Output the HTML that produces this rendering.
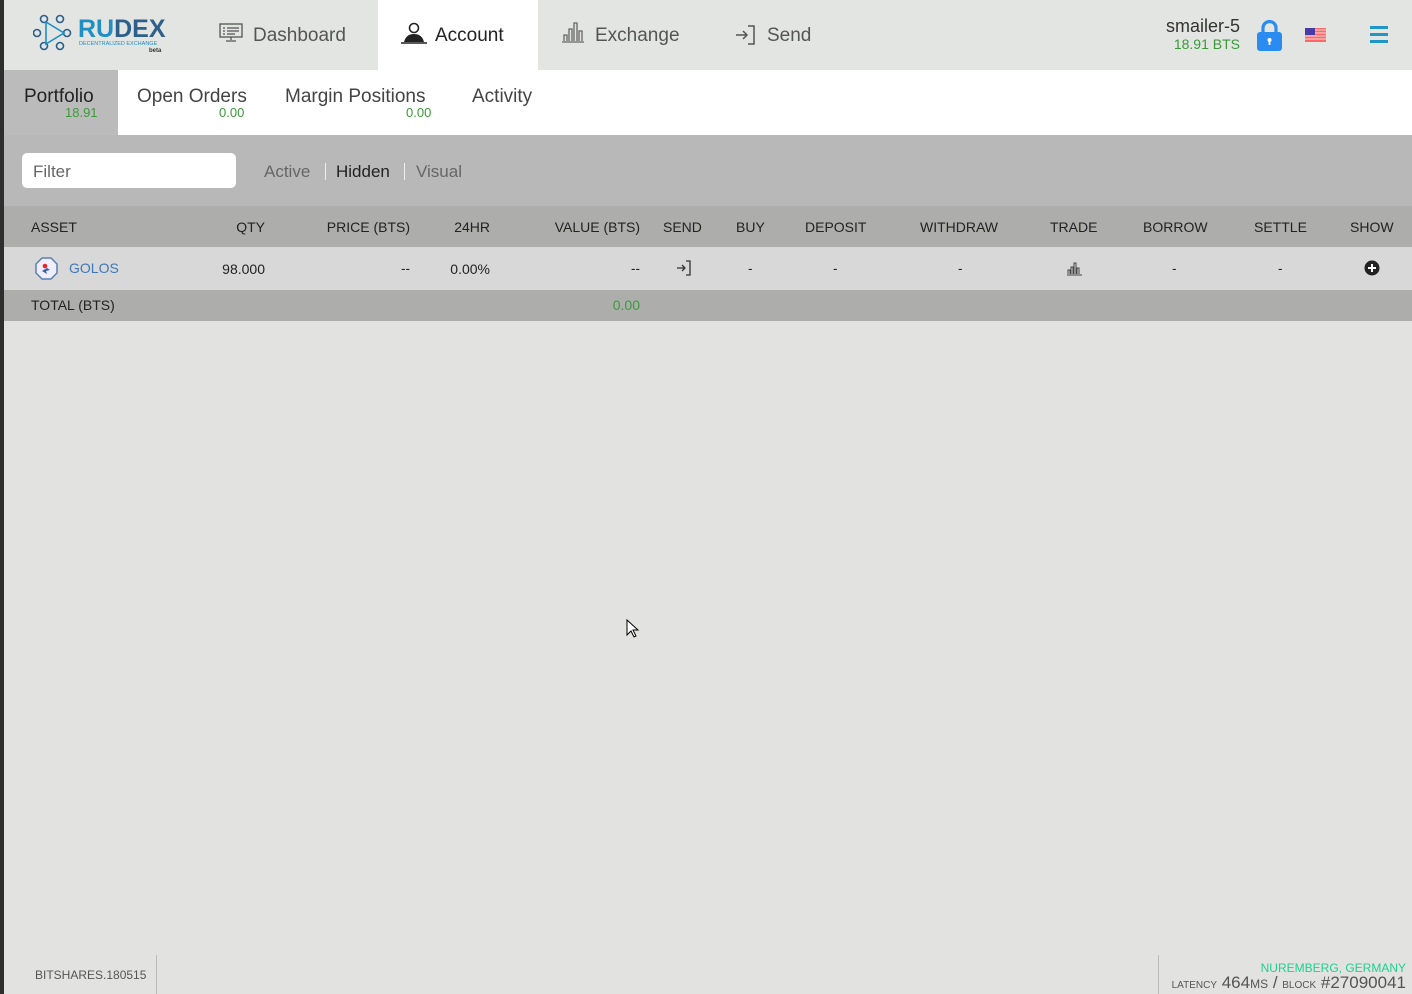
<!DOCTYPE html>
<html><head><meta charset="utf-8"><style>
*{margin:0;padding:0;box-sizing:border-box}
body{width:1412px;height:994px;background:#e2e3e1;font-family:"Liberation Sans",sans-serif;position:relative;overflow:hidden;color:#333}
.a{position:absolute;white-space:nowrap}
.hd{font-size:14px;color:#222;top:219px}
.rw{font-size:13.5px;color:#222;top:261px}
</style></head><body>
<div class="a" style="left:0;top:0;width:4px;height:994px;background:#2e2e2e"></div>
<div class="a" style="left:4px;top:0;width:1408px;height:70px;background:#e3e5e2"></div>
<div class="a" style="left:378px;top:0;width:160px;height:70px;background:#fff"></div>
<svg class="a" style="left:33px;top:14px" width="42" height="38" viewBox="0 0 42 38" fill="none" stroke="#2a5d8c" stroke-width="1.6">
<circle cx="11" cy="5" r="3.5"/><circle cx="27" cy="5" r="3.5"/><circle cx="4" cy="19" r="3.5"/><circle cx="34" cy="19" r="3.5" /><circle cx="11" cy="32" r="3.5"/><circle cx="27" cy="32" r="3.5"/>
<path d="M13 8 L31 19 L13 30 Z" stroke="#1c8fc6"/></svg>
<div class="a" style="left:78px;top:15px;font-size:25px;font-weight:bold;color:#1f8fc4">RU<span style="color:#2d5f8a">DEX</span></div>
<div class="a" style="left:79px;top:41px;font-size:5.5px;color:#1f8fc4">DECENTRALIZED EXCHANGE</div>
<div class="a" style="left:149px;top:48px;font-size:6px;color:#333;font-weight:bold">beta</div>
<svg class="a" style="left:219px;top:23px" width="24" height="20" viewBox="0 0 24 20" fill="none" stroke="#555" stroke-width="1.3"><rect x="1" y="1" width="22" height="13"/><path d="M4 5h2M8 5h12M4 8h2M8 8h12M4 11h2M8 11h8M12 14v3M7 18h10"/></svg>
<div class="a" style="left:253px;top:25px;font-size:19px;color:#555">Dashboard</div>
<svg class="a" style="left:401px;top:22px" width="26" height="22" viewBox="0 0 26 22"><circle cx="13" cy="6" r="4.5" fill="none" stroke="#222" stroke-width="1.6"/><path d="M3 20 Q5 12 13 12 Q21 12 23 20Z" fill="#222"/><path d="M0 21h26" stroke="#222" stroke-width="1.4"/></svg>
<div class="a" style="left:435px;top:25px;font-size:19px;color:#222">Account</div>
<svg class="a" style="left:561px;top:21px" width="24" height="22" viewBox="0 0 24 22" fill="none" stroke="#666" stroke-width="1.3"><path d="M1 21h22M3 20v-6h3v6M8 20v-12h3v12M13 20v-18h3v18M18 20v-10h3v10"/></svg>
<div class="a" style="left:595px;top:25px;font-size:19px;color:#555">Exchange</div>
<svg class="a" style="left:735px;top:24px" width="22" height="22" viewBox="0 0 22 22" fill="none" stroke="#555" stroke-width="1.5"><path d="M1 11h11M8 7l4 4-4 4" /><path d="M13 2h6v18h-6"/></svg>
<div class="a" style="left:767px;top:25px;font-size:19px;color:#555">Send</div>
<div class="a" style="right:172px;top:16px;font-size:18px;color:#333">smailer-5</div>
<div class="a" style="right:172px;top:36px;font-size:14px;color:#3a9a3a">18.91 BTS</div>
<svg class="a" style="left:1257px;top:20px" width="25" height="31" viewBox="0 0 25 31"><path d="M6 13V8a6.5 6.5 0 0 1 13 0v5" fill="none" stroke="#2a8cf0" stroke-width="3.2"/><rect x="0" y="12" width="25" height="19" rx="3" fill="#2a8cf0"/><circle cx="12.5" cy="20" r="2" fill="#fff"/><rect x="11.6" y="20" width="1.8" height="5" fill="#fff"/></svg>
<svg class="a" style="left:1305px;top:28px" width="21" height="14" viewBox="0 0 21 14"><rect width="21" height="14" fill="#f66"/><path d="M0 2h21M0 5h21M0 8h21M0 11h21" stroke="#fdd" stroke-width="1"/><rect width="10" height="7" fill="#4a3aa8"/></svg>
<div class="a" style="left:1370px;top:26px;width:18px;height:3px;background:#1e96c8"></div>
<div class="a" style="left:1370px;top:33px;width:18px;height:3px;background:#1e96c8"></div>
<div class="a" style="left:1370px;top:40px;width:18px;height:3px;background:#1e96c8"></div>
<div class="a" style="left:4px;top:70px;width:1408px;height:65px;background:#fff"></div>
<div class="a" style="left:4px;top:70px;width:114px;height:65px;background:#bbb"></div>
<div class="a" style="left:24px;top:86px;font-size:19px;color:#222">Portfolio</div>
<div class="a" style="left:65px;top:105px;font-size:13px;color:#3a9a3a">18.91</div>
<div class="a" style="left:137px;top:86px;font-size:19px;color:#444">Open Orders</div>
<div class="a" style="left:219px;top:105px;font-size:13px;color:#3a9a3a">0.00</div>
<div class="a" style="left:285px;top:86px;font-size:19px;color:#444">Margin Positions</div>
<div class="a" style="left:406px;top:105px;font-size:13px;color:#3a9a3a">0.00</div>
<div class="a" style="left:472px;top:86px;font-size:19px;color:#444">Activity</div>
<div class="a" style="left:4px;top:135px;width:1408px;height:71px;background:#b8b8b8"></div>
<div class="a" style="left:22px;top:153px;width:214px;height:35px;background:#fff;border-radius:5px"></div>
<div class="a" style="left:33px;top:162px;font-size:17px;color:#666">Filter</div>
<div class="a" style="left:264px;top:162px;font-size:17px;color:#666">Active</div>
<div class="a" style="left:325px;top:163px;width:1px;height:17px;background:#eee"></div>
<div class="a" style="left:336px;top:162px;font-size:17px;color:#222">Hidden</div>
<div class="a" style="left:404px;top:163px;width:1px;height:17px;background:#eee"></div>
<div class="a" style="left:416px;top:162px;font-size:17px;color:#666">Visual</div>
<div class="a" style="left:4px;top:206px;width:1408px;height:41px;background:#adaeac"></div>
<div class="a" style="left:4px;top:247px;width:1408px;height:43px;background:#d8d8d8"></div>
<div class="a" style="left:4px;top:290px;width:1408px;height:31px;background:#adaeac"></div>
<div class="a hd" style="left:31px">ASSET</div>
<div class="a hd" style="right:1147px">QTY</div>
<div class="a hd" style="right:1002px">PRICE (BTS)</div>
<div class="a hd" style="right:922px">24HR</div>
<div class="a hd" style="right:772px">VALUE (BTS)</div>
<div class="a hd" style="left:663px">SEND</div>
<div class="a hd" style="left:736px">BUY</div>
<div class="a hd" style="left:805px">DEPOSIT</div>
<div class="a hd" style="left:920px">WITHDRAW</div>
<div class="a hd" style="left:1050px">TRADE</div>
<div class="a hd" style="left:1143px">BORROW</div>
<div class="a hd" style="left:1254px">SETTLE</div>
<div class="a hd" style="left:1350px">SHOW</div>
<svg class="a" style="left:35px;top:257px" width="23" height="23" viewBox="0 0 23 23"><path d="M7 1h9l6 6v9l-6 6H7l-6-6V7z" fill="#eef" stroke="#5a7fb0" stroke-width="1.5"/><circle cx="10" cy="9" r="2.3" fill="#e22"/><path d="M7 14l5-3 3 2-4 1 1 3z" fill="#3a5fa0"/></svg>
<div class="a rw" style="left:69px;top:260px;font-size:14px;color:#3f78b8">GOLOS</div>
<div class="a rw" style="right:1147px;font-size:14px">98.000</div>
<div class="a rw" style="right:1002px">--</div>
<div class="a rw" style="right:922px;font-size:14px">0.00%</div>
<div class="a rw" style="right:772px">--</div>
<svg class="a" style="left:676px;top:260px" width="16" height="16" viewBox="0 0 16 16" fill="none" stroke="#333" stroke-width="1.3"><path d="M1 8h8M6 5l3 3-3 3"/><path d="M10 1h4v14h-4"/></svg>
<div class="a rw" style="left:748px">-</div>
<div class="a rw" style="left:833px">-</div>
<div class="a rw" style="left:958px">-</div>
<svg class="a" style="left:1066px;top:259px" width="17" height="17" viewBox="0 0 17 17" fill="none" stroke="#444" stroke-width="1"><path d="M1 16h15M2 15v-4h2v4M5 15v-7h2v7M8 15v-11h2v11M11 15v-6h2v6"/></svg>
<div class="a rw" style="left:1172px">-</div>
<div class="a rw" style="left:1278px">-</div>
<svg class="a" style="left:1364px;top:260px" width="16" height="16" viewBox="0 0 16 16"><circle cx="8" cy="8" r="7.5" fill="#222"/><path d="M8 4v8M4 8h8" stroke="#fff" stroke-width="2"/></svg>
<div class="a" style="left:31px;top:297px;font-size:14px;color:#222">TOTAL (BTS)</div>
<div class="a" style="right:772px;top:297px;font-size:14px;color:#3a9a3a">0.00</div>
<svg class="a" style="left:626px;top:619px" width="14" height="20" viewBox="0 0 14 20"><path d="M1 1v15l4-4 3 6 2-1-3-6h5z" fill="#fff" stroke="#000"/></svg>
<div class="a" style="left:35px;top:968px;font-size:12px;color:#555">BITSHARES.180515</div>
<div class="a" style="left:156px;top:955px;width:1px;height:39px;background:#bbb"></div>
<div class="a" style="left:1158px;top:955px;width:1px;height:39px;background:#bbb"></div>
<div class="a" style="right:6px;top:961px;font-size:12px;color:#1fd08f">NUREMBERG, GERMANY</div>
<div class="a" style="right:6px;top:973px;font-size:17px;color:#555"><span style="font-size:10px">LATENCY</span> 464<span style="font-size:12px">MS</span> / <span style="font-size:10px">BLOCK</span> #27090041</div>
</body></html>
